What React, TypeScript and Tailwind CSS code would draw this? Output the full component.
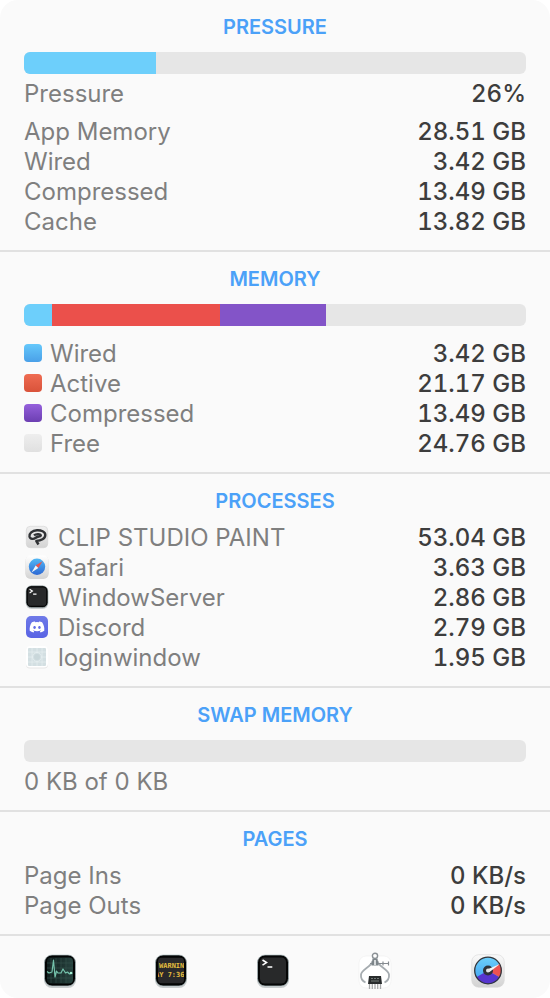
import type { ReactNode } from 'react';
import { FaDiscord } from 'react-icons/fa';

type Segment = { name: string; percent: number; color: string };

function Section({ title, children }: { title: string; children: ReactNode }) {
  return (
    <section className="border-b-2 border-[#e1e1e1] px-6 pt-3 pb-[13px]">
      <h2 className="text-center text-xl leading-[30px] font-semibold text-[#4ba1f8]">{title}</h2>
      {children}
    </section>
  );
}

function Bar({ label, segments }: { label: string; segments: Segment[] }) {
  return (
    <div role="img" aria-label={label} className="mt-[10px] flex h-[22px] overflow-hidden rounded-md bg-[#e6e6e6]">
      {segments.map((s) => (
        <div key={s.name} className={s.color} style={{ width: `${s.percent}%` }} />
      ))}
    </div>
  );
}

function Row({ label, value, icon }: { label: string; value: string; icon?: ReactNode }) {
  return (
    <div className="flex h-[30px] items-center justify-between">
      <dt className="flex items-center gap-2 text-[#7f7f7f]">
        {icon && <span className="pb-0.5">{icon}</span>}
        {label}
      </dt>
      <dd className="font-medium text-[#3d3d3d] tabular-nums">{value}</dd>
    </div>
  );
}

function Swatch({ color }: { color: string }) {
  return <span className={`block h-[18px] w-[18px] rounded-[4px] bg-linear-to-b ${color}`} />;
}

function ClipIcon() {
  return (
    <svg viewBox="0 0 26 26" className="h-[26px] w-[26px]" aria-hidden="true">
      <defs>
        <linearGradient id="clip-tile" x2="0" y2="1">
          <stop stopColor="#f0f0f0" />
          <stop offset="1" stopColor="#d4d4d4" />
        </linearGradient>
      </defs>
      <rect x="2.300" y="2.300" width="21.400" height="21.400" rx="4" fill="url(#clip-tile)" stroke="#d2d2d2" strokeWidth=".6" />
      <path
        d="M14.500 20.500 12.300 17C17 16.800 21.300 14.500 21.300 11 21.300 7.500 17 6 13 6.200 8 6.500 5 9.500 5.500 12.500 6.200 15.500 9.800 15.300 11.800 13.700 13.700 12.300 16 12.700 16.800 11.500 17 9.800 12 9.500 10 11.300"
        fill="none"
        stroke="#303235"
        strokeWidth="2.400"
        strokeLinejoin="round"
      />
    </svg>
  );
}

function SafariIcon() {
  return (
    <svg viewBox="0 0 26 26" className="h-[26px] w-[26px]" aria-hidden="true">
      <defs>
        <linearGradient id="safari-tile" x2="0" y2="1">
          <stop stopColor="#ffffff" />
          <stop offset="1" stopColor="#d5d5d5" />
        </linearGradient>
        <linearGradient id="safari-dial" x2="0" y2="1">
          <stop stopColor="#52b8f5" />
          <stop offset="1" stopColor="#2d68d4" />
        </linearGradient>
      </defs>
      <rect x="1.500" y="2" width="23" height="23" rx="5" fill="#bdbdbd" opacity=".6" />
      <rect x="1.500" y="1.500" width="23" height="22.500" rx="5" fill="url(#safari-tile)" />
      <circle cx="13" cy="12.800" r="8.200" fill="url(#safari-dial)" />
      <path d="M18.500 7.200 14.300 14.100 11.700 11.500z" fill="#e9554d" />
      <path d="M7.500 18.400 11.700 11.500 14.300 14.100z" fill="#f4f6f8" />
    </svg>
  );
}

function TerminalIcon({ className }: { className: string }) {
  return (
    <svg viewBox="0 0 34 34" className={className} aria-hidden="true">
      <rect x="1" y="2" width="32" height="32" rx="8" fill="#8e9699" opacity=".45" />
      <rect x="1.500" y="1" width="31" height="31" rx="7.500" fill="#050606" stroke="#b3c3c6" strokeWidth=".7" />
      <rect x="4" y="3.500" width="26" height="26" rx="4.500" fill="#28292a" />
      <path d="m6.500 6 4 2.600-4 2.600M11.500 13h4.800" fill="none" stroke="#fff" strokeWidth="1.600" />
    </svg>
  );
}

function DiscordIcon() {
  return (
    <span className="flex h-[26px] w-[26px] items-center justify-center">
      <span className="flex h-[22px] w-[22px] items-center justify-center rounded-[5px] bg-linear-to-b from-[#6f7ae8] to-[#5963e4]">
        <FaDiscord className="h-4 w-4 text-white" aria-hidden="true" />
      </span>
    </span>
  );
}

function LoginIcon() {
  return (
    <svg viewBox="0 0 26 26" className="h-[26px] w-[26px]" aria-hidden="true">
      <rect x="2" y="2.500" width="22" height="22" rx="4" fill="#e6e6e6" />
      <rect x="2" y="2" width="22" height="21.500" rx="4" fill="#fff" />
      <rect x="4" y="4" width="18" height="18" rx="1" fill="#d3dfe2" />
      <g fill="none" stroke="#e6eff0" strokeWidth=".7">
        <path d="M4 8h18M4 13h5M17 13h5M4 18h18M8 4v18M18 4v18M13 4v5M13 17v5" />
        <circle cx="13" cy="13" r="4.500" />
      </g>
      <circle cx="13" cy="13" r="3" fill="#c9d7da" />
    </svg>
  );
}

function ActivityIcon() {
  return (
    <svg viewBox="0 0 34 34" className="h-[34px] w-[34px]" aria-hidden="true">
      <defs>
        <linearGradient id="scope">
          <stop stopColor="#101d1d" />
          <stop offset="1" stopColor="#27433f" />
        </linearGradient>
      </defs>
      <rect x="1" y="2" width="32" height="32" rx="8" fill="#8e9699" opacity=".45" />
      <rect x="1.500" y="1" width="31" height="31" rx="7.500" fill="#020404" stroke="#b3c3c6" strokeWidth=".7" />
      <rect x="4" y="3.500" width="26" height="26" rx="4" fill="url(#scope)" />
      <path d="M4 9h26M4 14h26M4 19h26M4 24h26M8 4v25M13 4v25M18 4v25M23 4v25" stroke="#36544f" strokeWidth=".6" />
      <path d="M4 17.500 6 19l3-1 1.500-12L12 23l1.500-6 1.500 2h3l2-4 2.500 4 2-1 2 2 3-1" fill="none" stroke="#74c2ab" strokeWidth="1.200" strokeLinejoin="round" />
      <circle cx="28" cy="19" r="1.200" fill="#a6f3d5" />
    </svg>
  );
}

function ConsoleIcon() {
  return (
    <svg viewBox="0 0 34 34" className="h-[34px] w-[34px]" aria-hidden="true">
      <defs>
        <clipPath id="console-screen">
          <rect x="4" y="3.500" width="26" height="26" rx="4" />
        </clipPath>
      </defs>
      <rect x="1" y="2" width="32" height="32" rx="8" fill="#8e9699" opacity=".45" />
      <rect x="1.500" y="1" width="31" height="31" rx="7.500" fill="#030404" stroke="#b3c3c6" strokeWidth=".7" />
      <g clipPath="url(#console-screen)">
        <rect x="4" y="3.500" width="26" height="26" fill="#29292b" />
        <text x="5" y="14" fill="#e3bd3f" className="font-['DejaVu_Sans_Mono',monospace] text-[7px] font-bold">WARNIN</text>
        <text x="1" y="23" fill="#e3bd3f" className="font-['DejaVu_Sans_Mono',monospace] text-[7px] font-bold">AY 7:36</text>
      </g>
    </svg>
  );
}

function SystemInfoIcon() {
  return (
    <svg viewBox="0 0 34 38" className="h-[38px] w-[34px]" aria-hidden="true">
      <rect x="1" y="4" width="32" height="32" rx="7" fill="#fff" stroke="#efefef" strokeWidth=".6" />
      <path
        d="M14.500 9C13.500 15 4 17 3 22.500 2.600 26 4.500 29 7.500 30.500M19.500 9C20.500 15 30 17 31 22.500 31.400 26 29.500 29 26.500 30.500"
        fill="none"
        stroke="#a6acb0"
        strokeWidth="1.800"
      />
      <path d="M12 11.500h19M25 9.500v4M30.500 9.500v4" stroke="#858b90" strokeWidth="1.200" />
      <circle cx="17" cy="3.800" r="2.600" fill="#fff" stroke="#8b9195" strokeWidth="1.400" />
      <path d="M14.500 6.500h5l1 7h-7z" fill="#7d858a" />
      <path d="M16 8h2v5h-2z" fill="#d5d9db" />
      <path d="M11.500 31v6M14.300 31v6M17 31v6M19.700 31v6M22.500 31v6" stroke="#a8aaab" strokeWidth="1.300" />
      <path d="M11 24h12l1 8H10z" fill="#292c2d" />
      <path d="M13 26.500h2M16 26.500h2M19 26.500h2M13 29h8" stroke="#7c8381" strokeWidth=".9" />
    </svg>
  );
}

function StatsIcon() {
  return (
    <svg viewBox="0 0 34 34" className="h-[34px] w-[34px]" aria-hidden="true">
      <defs>
        <linearGradient id="stats-tile" x2="0" y2="1">
          <stop stopColor="#fafafa" />
          <stop offset="1" stopColor="#d2d2d2" />
        </linearGradient>
        <linearGradient id="stats-blue" x2="0" y2="1">
          <stop stopColor="#6dd0fb" />
          <stop offset="1" stopColor="#3c9df0" />
        </linearGradient>
      </defs>
      <rect x=".7" y=".7" width="32.600" height="32.600" rx="7" fill="url(#stats-tile)" stroke="#d8d8d8" strokeWidth=".6" />
      <circle cx="17" cy="16.500" r="13.500" fill="url(#stats-blue)" />
      <path d="M17 16.500 5.300 23.200a13.500 13.500 0 0 0 23.400 0z" fill="#5735cf" />
      <path d="M17 16.500 28.700 23.200a13.500 13.500 0 0 0 0-13.400z" fill="#ed5250" />
      <circle cx="17" cy="16.500" r="13.300" fill="none" stroke="#34363b" strokeWidth="1.300" />
      <circle cx="17" cy="16.500" r="5" fill="#303238" />
      <path d="M16 15.500 29 10 18.500 18z" fill="#f4f6f8" />
      <circle cx="17" cy="16.500" r="2" fill="#e6e8ea" />
    </svg>
  );
}

const apps = [
  { name: 'Activity Monitor', icon: <ActivityIcon /> },
  { name: 'Console', icon: <ConsoleIcon /> },
  { name: 'Terminal', icon: <TerminalIcon className="h-[34px] w-[34px]" /> },
  { name: 'System Information', icon: <SystemInfoIcon /> },
  { name: 'iStat Menus', icon: <StatsIcon /> },
];

export default function App() {
  return (
    <main className="overflow-hidden rounded-[18px] bg-[#fafafa] font-['Inter','Liberation_Sans',sans-serif] text-2xl">
      <Section title="PRESSURE">
        <Bar label="Memory pressure 26%" segments={[{ name: 'Pressure', percent: 26.3, color: 'bg-[#6dcffb]' }]} />
        <dl className="mt-[5px]">
          <Row label="Pressure" value="26%" />
        </dl>
        <dl className="mt-2">
          <Row label="App Memory" value="28.51 GB" />
          <Row label="Wired" value="3.42 GB" />
          <Row label="Compressed" value="13.49 GB" />
          <Row label="Cache" value="13.82 GB" />
        </dl>
      </Section>

      <Section title="MEMORY">
        <Bar
          label="Memory usage"
          segments={[
            { name: 'Wired', percent: 5.6, color: 'bg-[#6dcffb]' },
            { name: 'Active', percent: 33.5, color: 'bg-[#eb504b]' },
            { name: 'Compressed', percent: 21.1, color: 'bg-[#8354c8]' },
          ]}
        />
        <dl className="mt-[13px]">
          <Row label="Wired" value="3.42 GB" icon={<Swatch color="from-[#65c8fb] to-[#4aa0e8]" />} />
          <Row label="Active" value="21.17 GB" icon={<Swatch color="from-[#ef6c52] to-[#d9523a]" />} />
          <Row label="Compressed" value="13.49 GB" icon={<Swatch color="from-[#9560dc] to-[#6c3fb2]" />} />
          <Row label="Free" value="24.76 GB" icon={<Swatch color="from-[#eeeeee] to-[#e0e0e0]" />} />
        </dl>
      </Section>

      <Section title="PROCESSES">
        <dl className="mt-[7px]">
          <Row label="CLIP STUDIO PAINT" value="53.04 GB" icon={<ClipIcon />} />
          <Row label="Safari" value="3.63 GB" icon={<SafariIcon />} />
          <Row label="WindowServer" value="2.86 GB" icon={<TerminalIcon className="mx-px h-6 w-6" />} />
          <Row label="Discord" value="2.79 GB" icon={<DiscordIcon />} />
          <Row label="loginwindow" value="1.95 GB" icon={<LoginIcon />} />
        </dl>
      </Section>

      <Section title="SWAP MEMORY">
        <Bar label="Swap memory usage" segments={[]} />
        <p className="mt-[5px] leading-[30px] text-[#7f7f7f]">0 KB of 0 KB</p>
      </Section>

      <Section title="PAGES">
        <dl className="mt-[7px]">
          <Row label="Page Ins" value="0 KB/s" />
          <Row label="Page Outs" value="0 KB/s" />
        </dl>
      </Section>

      <footer className="grid h-[62px] grid-cols-[120fr_102fr_102fr_102fr_124fr] items-center justify-items-center pt-2">
        {apps.map((app) => (
          <button key={app.name} type="button" aria-label={app.name} className="flex h-[38px] items-center">
            {app.icon}
          </button>
        ))}
      </footer>
    </main>
  );
}
